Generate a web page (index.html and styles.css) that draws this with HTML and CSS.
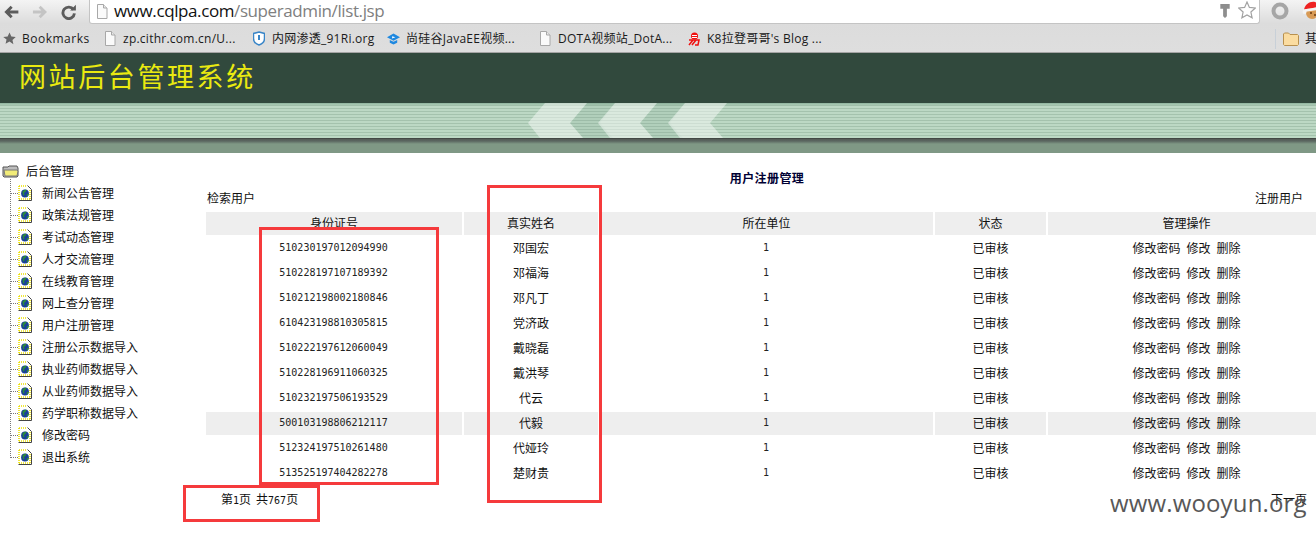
FILE: index.html
```html
<!DOCTYPE html>
<html lang="zh">
<head>
<meta charset="utf-8">
<title>网站后台管理系统</title>
<link rel="stylesheet" href="styles.css">
</head>
<body>
<svg class="defs" width="0" height="0" aria-hidden="true">
  <symbol id="page" viewBox="0 0 12 15">
    <path d="M1.5.5h6l3.5 3.5v10.500h-9.500z" fill="#fafafa" stroke="#a8a8a8"/>
    <path d="M7.500.5v3.500h3.500" fill="#e8e8e8" stroke="#a8a8a8"/>
  </symbol>
  <symbol id="doc" viewBox="0 0 14 16">
    <path d="M.5.500h9l4 4v11h-13z" fill="#fff"/>
    <path d="M9.500.5l4 4v11h-13" fill="none" stroke="#444"/>
    <path d="M1 1h8M1 1v14M1 14h11M12 5v9" stroke="#ecdf00" stroke-width="1.600" stroke-dasharray="1 1" fill="none"/>
    <circle cx="7" cy="8.500" r="3.900" fill="#1a3f9a"/>
    <path d="M4.500 6.500c1-1.500 3-2 4-1.500l-1 2-1.500 1 .5 2-1.500.5zM9 9l1.800-.5-.8 2.500-1.500 1z" fill="#2c8a3c"/>
  </symbol>
</svg>

<header class="browser">
  <div class="toolbar">
    <div class="nav">
      <svg class="nav-icon" viewBox="0 0 16 14"><path d="M15 7H3M8 1.500 2.500 7 8 12.500" fill="none" stroke="#5c5c5c" stroke-width="3"/></svg>
      <svg class="nav-icon" viewBox="0 0 16 14"><path d="M1 7h12M8 1.500 13.500 7 8 12.500" fill="none" stroke="#c4c4c4" stroke-width="3"/></svg>
      <svg class="nav-icon reload" viewBox="0 0 16 16"><path d="M13 5.500A6 6 0 1 0 14 9.500" fill="none" stroke="#5c5c5c" stroke-width="3"/><path d="M9.500 6.500h6v-6z" fill="#5c5c5c"/></svg>
    </div>
    <div class="urlbar">
      <svg class="url-page"><use href="#page"/></svg>
      <span class="url"><span class="url-host">www.cqlpa.com</span>/superadmin/list.jsp</span>
      <svg class="key" viewBox="0 0 10 16"><path d="M0 1h10v5H7v8l-2 2-2-2V6H0z" fill="#8e8e8e"/></svg>
      <svg class="star" viewBox="0 0 18 18"><path d="m9 1 2.400 5.400 5.900.6-4.400 4 1.200 5.800L9 13.900l-5.100 2.900 1.200-5.800-4.400-4 5.900-.6z" fill="#fff" stroke="#a2a2a2" stroke-width="1.200"/></svg>
    </div>
    <svg class="ring" viewBox="0 0 18 18"><circle cx="9" cy="9" r="6.500" fill="none" stroke="#a6a6a6" stroke-width="4"/></svg>
    <svg class="santa" viewBox="0 0 18 18"><circle cx="10" cy="12" r="6" fill="#d89a55"/><path d="M2 9C3 3 8 0 13 1c3 1 4 3 5 5L5 8z" fill="#e22"/><path d="M1 8.500 18 6v2.500L2 11z" fill="#f4f4f4"/><circle cx="2.500" cy="11" r="2" fill="#f4f4f4"/><circle cx="9" cy="12" r="1" fill="#6b3a12"/><circle cx="13" cy="14" r="1" fill="#6b3a12"/></svg>
  </div>
  <nav class="bookmarks">
    <span class="bm bm-main"><svg class="bm-star" viewBox="0 0 14 14"><path d="m7 .5 2 4.300 4.700.5-3.500 3.200 1 4.700L7 10.300l-4.200 2.400 1-4.700L.3 5.300 5 4.800z" fill="#666"/></svg><span class="bm-label">Bookmarks</span></span>
    <span class="bm bm-zp"><svg class="bm-icon"><use href="#page"/></svg><span>zp.cithr.com.cn/U...</span></span>
    <span class="bm bm-ri"><svg class="bm-icon" viewBox="0 0 12 15"><path d="M6 1 11.500 2.500v5c0 3-2.500 5.500-5.500 6.500C3 13 .5 10.500.5 7.500v-5z" fill="#fff" stroke="#3a86c8" stroke-width="1.500"/><path d="M6 4v5" stroke="#3a86c8" stroke-width="2"/></svg><span>内网渗透_91Ri.org</span></span>
    <span class="bm bm-gu"><svg class="bm-icon wide" viewBox="0 0 14 14"><path d="M7 1 14 5 7 9 0 5z" fill="#1e88e0"/><path d="M3 8v3l4 2 4-2V8L7 10z" fill="#1e88e0"/><path d="M5.500 4 9 5 5.500 6.500z" fill="#fff"/></svg><span>尚硅谷JavaEE视频...</span></span>
    <span class="bm bm-do"><svg class="bm-icon"><use href="#page"/></svg><span>DOTA视频站_DotA...</span></span>
    <span class="bm bm-k8"><svg class="bm-icon wide" viewBox="0 0 13 14"><circle cx="6.500" cy="4" r="3.500" fill="#f01010"/><path d="M4 3.500h5M4 5.500h5" stroke="#fff"/><path d="M1 8h10l-1 5H7M5 8 1 13M8 8l-4 5" fill="none" stroke="#f01010" stroke-width="1.500"/></svg><span>K8拉登哥哥's Blog ...</span></span>
    <span class="bm bm-other"><svg class="bm-folder" viewBox="0 0 16 14"><path d="M.5 12.500V2l1-1h4l1.500 1.500h7.500l1 1v9l-1 1h-13z" fill="#fbdca0" stroke="#b8904e"/></svg><span>其</span></span>
  </nav>
</header>

<section class="banner">
  <div class="banner-title"><h1>网站后台管理系统</h1></div>
  <div class="banner-stripe">
    <svg class="chevrons" viewBox="0 0 300 35" width="300" height="35">
      <g fill="#7fa48c" opacity=".16">
        <path d="M67 0h28L80 20 93 35H63L50 20zM137 0h28L150 20 163 35H133L120 20z"/>
      </g>
      <g fill="#fff" opacity=".45">
        <path d="M25 0h42L50 20 63 35H20L8 20zM95 0h42L120 20 133 35H90L78 20zM165 0h42L190 20 203 35H160L148 20z"/>
      </g>
    </svg>
  </div>
  <div class="banner-band"></div>
</section>

<main class="layout">
  <aside class="tree">
    <div class="tree-root">
      <svg class="tree-folder" viewBox="0 0 17 14"><path d="M1 3h5l1-1h8l1 2v8l-1 1H2l-1-1z" fill="#bdbdbd" stroke="#555"/><path d="M2 6h13l1 1-1 5H3z" fill="#f2ec78" stroke="#777"/></svg>
      <span>后台管理</span>
    </div>
    <ul class="tree-list">
      <li><svg class="tree-doc"><use href="#doc"/></svg><span>新闻公告管理</span></li>
      <li><svg class="tree-doc"><use href="#doc"/></svg><span>政策法规管理</span></li>
      <li><svg class="tree-doc"><use href="#doc"/></svg><span>考试动态管理</span></li>
      <li><svg class="tree-doc"><use href="#doc"/></svg><span>人才交流管理</span></li>
      <li><svg class="tree-doc"><use href="#doc"/></svg><span>在线教育管理</span></li>
      <li><svg class="tree-doc"><use href="#doc"/></svg><span>网上查分管理</span></li>
      <li><svg class="tree-doc"><use href="#doc"/></svg><span>用户注册管理</span></li>
      <li><svg class="tree-doc"><use href="#doc"/></svg><span>注册公示数据导入</span></li>
      <li><svg class="tree-doc"><use href="#doc"/></svg><span>执业药师数据导入</span></li>
      <li><svg class="tree-doc"><use href="#doc"/></svg><span>从业药师数据导入</span></li>
      <li><svg class="tree-doc"><use href="#doc"/></svg><span>药学职称数据导入</span></li>
      <li><svg class="tree-doc"><use href="#doc"/></svg><span>修改密码</span></li>
      <li><svg class="tree-doc"><use href="#doc"/></svg><span>退出系统</span></li>
    </ul>
  </aside>

  <section class="content">
    <h2 class="page-title">用户注册管理</h2>
    <div class="actions"><span>检索用户</span><span>注册用户</span></div>
    <table class="users">
      <colgroup><col class="c-id"><col class="c-name"><col class="c-unit"><col class="c-state"><col class="c-ops"></colgroup>
      <thead><tr><th>身份证号</th><th>真实姓名</th><th>所在单位</th><th>状态</th><th>管理操作</th></tr></thead>
      <tbody>
        <tr><td class="num">510230197012094990</td><td>邓国宏</td><td class="num">1</td><td>已审核</td><td class="ops"><span>修改密码</span><span>修改</span><span>删除</span></td></tr>
        <tr><td class="num">510228197107189392</td><td>邓福海</td><td class="num">1</td><td>已审核</td><td class="ops"><span>修改密码</span><span>修改</span><span>删除</span></td></tr>
        <tr><td class="num">510212198002180846</td><td>邓凡丁</td><td class="num">1</td><td>已审核</td><td class="ops"><span>修改密码</span><span>修改</span><span>删除</span></td></tr>
        <tr><td class="num">610423198810305815</td><td>党济政</td><td class="num">1</td><td>已审核</td><td class="ops"><span>修改密码</span><span>修改</span><span>删除</span></td></tr>
        <tr><td class="num">510222197612060049</td><td>戴晓磊</td><td class="num">1</td><td>已审核</td><td class="ops"><span>修改密码</span><span>修改</span><span>删除</span></td></tr>
        <tr><td class="num">510228196911060325</td><td>戴洪琴</td><td class="num">1</td><td>已审核</td><td class="ops"><span>修改密码</span><span>修改</span><span>删除</span></td></tr>
        <tr><td class="num">510232197506193529</td><td>代云</td><td class="num">1</td><td>已审核</td><td class="ops"><span>修改密码</span><span>修改</span><span>删除</span></td></tr>
        <tr class="hover"><td class="num">500103198806212117</td><td>代毅</td><td class="num">1</td><td>已审核</td><td class="ops"><span>修改密码</span><span>修改</span><span>删除</span></td></tr>
        <tr><td class="num">512324197510261480</td><td>代娅玲</td><td class="num">1</td><td>已审核</td><td class="ops"><span>修改密码</span><span>修改</span><span>删除</span></td></tr>
        <tr><td class="num">513525197404282278</td><td>楚财贵</td><td class="num">1</td><td>已审核</td><td class="ops"><span>修改密码</span><span>修改</span><span>删除</span></td></tr>
      </tbody>
    </table>
    <div class="pager"><span class="pager-info"><span>第<span class="digits">1</span>页</span><span>共<span class="digits">767</span>页</span></span><span>下一页</span></div>
  </section>
</main>

<div class="mark mark-id"></div>
<div class="mark mark-name"></div>
<div class="mark mark-page"></div>
<div class="watermark">www.wooyun.org</div>
</body>
</html>
```

FILE: styles.css
```css
* { box-sizing: border-box; }
html, body { margin: 0; height: 533px; overflow: hidden; background: #fff; }
body {
  position: relative;
  width: 1316px;
  font: 12px/14px "Noto Sans CJK SC", "Liberation Sans", sans-serif;
  color: #111;
}
.defs { position: absolute; }

/* browser chrome */
.browser { height: 53px; background: linear-gradient(#f4f4f4, #dcdcdc 45%, #dedede); border-bottom: 1px solid #a4a4a4; }
.toolbar { height: 24px; display: flex; align-items: flex-start; }
.toolbar > * { flex: none; }
.nav { width: 89px; height: 23px; display: flex; align-items: center; padding-left: 4px; }
.nav-icon { width: 16px; height: 14px; margin-right: 13px; }
.nav-icon.reload { width: 16px; height: 16px; margin-left: 0; }
.urlbar {
  width: 1171px; height: 24px;
  display: flex; align-items: center;
  background: #fff;
  border: 1px solid #c4c4c4; border-top: 0;
  border-radius: 0 0 3px 3px;
  padding: 0 3px 1px 6px;
}
.url-page { width: 12px; height: 15px; margin-right: 6px; flex: none; }
.url { font: 17px/22px "Open Sans", sans-serif; color: #808080; letter-spacing: -.4px; flex: 1; }
.url-host { color: #111; }
.key { width: 10px; height: 15px; margin-right: 8px; margin-bottom: 2px; }
.star { width: 18px; height: 18px; margin-bottom: 2px; }
.ring { width: 18px; height: 18px; margin: 2px 0 0 11px; }
.santa { width: 18px; height: 18px; margin: 1px 0 0 13px; }

.bookmarks { height: 28px; display: flex; align-items: center; position: relative; padding-top: 1px; white-space: nowrap; color: #1a1a1a; }
.bm { display: flex; align-items: center; flex: none; }
.bm-main { width: 104px; padding-left: 3px; }
.bm-star { width: 13px; height: 13px; margin-right: 6px; }
.bm span { font-family: "Open Sans", "Noto Sans CJK SC", sans-serif; font-size: 12px; letter-spacing: .25px; }
.bm .bm-label { letter-spacing: .5px; }
.bm-icon { width: 12px; height: 15px; margin-right: 7px; flex: none; }
.bm-icon.wide { width: 13px; height: 14px; margin-right: 6px; }
.bm-zp { width: 149px; }
.bm-ri { width: 134px; }
.bm-gu { width: 152px; }
.bm-do { width: 149px; }
.bm-k8 { width: 587px; }
.bm-other { border-left: 1px solid #c8d0d8; height: 20px; padding-left: 7px; }
.bm-folder { width: 16px; height: 14px; margin-right: 6px; flex: none; }

/* banner */
.banner-title { height: 50px; background: #31493d; display: flex; align-items: center; padding-left: 19px; }
.banner-title h1 { margin: 0 0 5px; font-size: 27px; line-height: 32px; font-weight: 400; letter-spacing: 2.6px; color: #eaea10; }
.banner-stripe {
  height: 35px; position: relative; overflow: hidden;
  background:
    linear-gradient(#8db39c, rgba(141,179,156,0) 3px),
    repeating-linear-gradient(#bcd8c4 0 2px, #a4c2ad 2px 3px);
}
.chevrons { position: absolute; left: 520px; top: 0; }
.banner-band { height: 15px; background: linear-gradient(#2f3531 0, #555a57 1px, #5a6660 3px, #7f9885 6px, #7f9885); }

/* layout */
.layout { display: flex; align-items: flex-start; }
.tree { width: 204px; flex: none; padding-top: 11px; }
.tree-root { height: 14px; display: flex; align-items: center; padding-left: 2px; gap: 7px; font-size: 12px; }
.tree-folder { width: 17px; height: 14px; }
.tree-list {
  list-style: none; margin: 4px 0 0; padding: 0 0 0 10px;
  position: relative;
}
.tree-list::before {
  content: ""; position: absolute; left: 10px; top: -3px; bottom: 10px;
  border-left: 1px dotted #777;
}
.tree-list li { height: 22px; display: flex; align-items: center; padding-left: 8px; position: relative; }
.tree-list li::before {
  content: ""; position: absolute; left: 0; top: 11px; width: 8px;
  border-top: 1px dotted #777;
}
.tree-doc { width: 14px; height: 16px; margin-right: 10px; flex: none; }

/* content */
.content { width: 1112px; flex: none; overflow: hidden; }
.page-title { margin: 0; padding-top: 18px; height: 32px; width: 1126px; text-align: center; font-size: 12px; line-height: 14px; font-weight: 700; letter-spacing: .4px; color: #000033; }
.actions { display: flex; justify-content: space-between; height: 25px; padding: 6px 13px 0 3px; }
.users { width: 1123px; table-layout: fixed; border-collapse: separate; border-spacing: 2px; }
.c-id { width: 256px; } .c-name { width: 134px; } .c-unit { width: 333px; } .c-state { width: 111px; } .c-ops { width: 277px; }
.users th, .users td { height: 23px; padding: 0 0 2px; text-align: center; font-weight: 400; font-size: 12px; line-height: 14px; }
.users th, .users .hover td { background: #eeeeee; }
.digits { font-family: "DejaVu Sans Mono", monospace; font-size: 10px; }
.users td.num { font-family: "DejaVu Sans Mono", monospace; font-size: 10px; padding: 0 1px 1px 0; color: #222; }
.ops span + span { margin-left: 6px; }
.pager { display: flex; justify-content: space-between; padding: 4px 9px 0 17px; line-height: 16px; }
.pager-info { display: flex; gap: 5px; }

/* overlays */
.mark { position: absolute; border: 3px solid #f53a3c; }
.mark-id { left: 259px; top: 227px; width: 180px; height: 258px; }
.mark-name { left: 487px; top: 185px; width: 115px; height: 318px; }
.mark-page { left: 183px; top: 485px; width: 137px; height: 37px; }
.watermark {
  position: absolute; left: 1110px; top: 488px;
  font: 24px/30px "Open Sans", sans-serif;
  letter-spacing: .15px;
  color: #4a4a4a; opacity: .92; white-space: nowrap;
}
```
